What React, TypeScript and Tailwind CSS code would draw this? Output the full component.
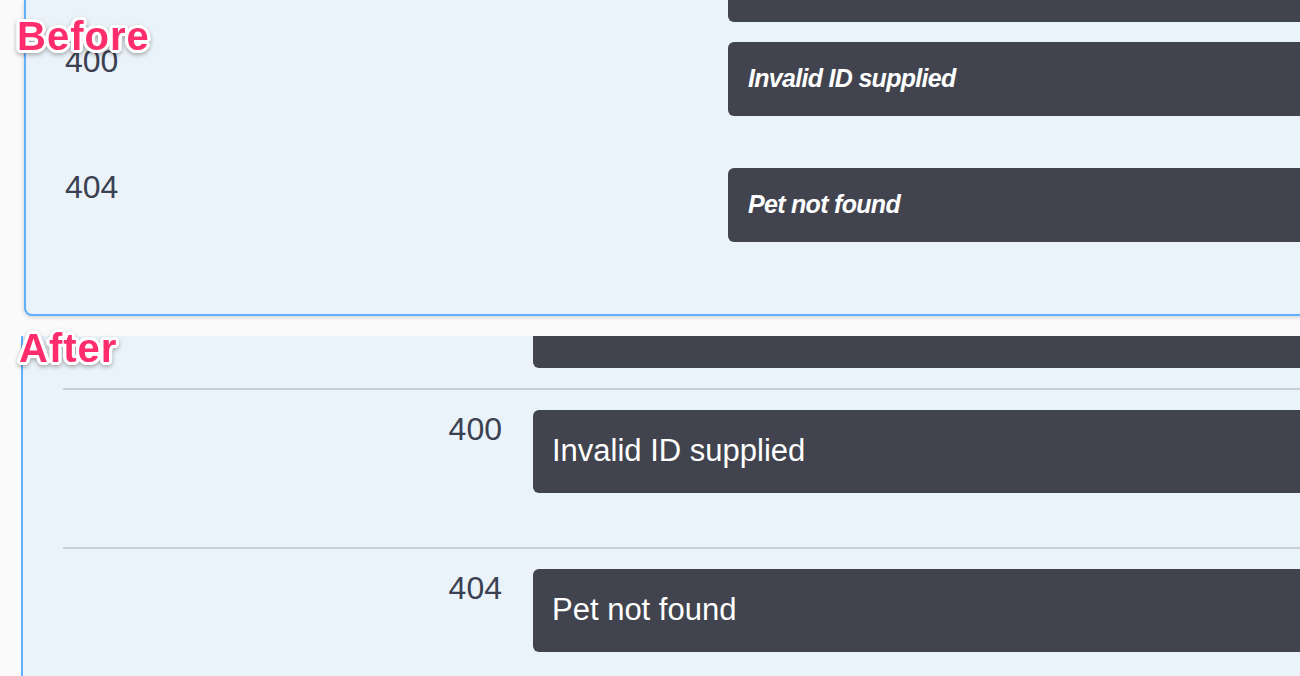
const labelShadow =
  '[text-shadow:3px_0_0_#fff,-3px_0_0_#fff,0_3px_0_#fff,0_-3px_0_#fff,2px_2px_0_#fff,-2px_-2px_0_#fff,2px_-2px_0_#fff,-2px_2px_0_#fff,1px_3px_0_#fff,-1px_3px_0_#fff,3px_1px_0_#fff,-3px_1px_0_#fff,1px_-3px_0_#fff,-1px_-3px_0_#fff,3px_-1px_0_#fff,-3px_-1px_0_#fff]';

function Label({ text }: { text: string }) {
  return (
    <span
      className={`font-['Liberation_Sans',Arial,sans-serif] text-[40px] leading-none font-bold tracking-[1px] text-[#ff2d6b] ${labelShadow} [filter:drop-shadow(0_2px_2px_rgba(0,0,0,0.3))]`}
    >
      {text}
    </span>
  );
}

const rows = [
  { code: '400', text: 'Invalid ID supplied' },
  { code: '404', text: 'Pet not found' },
];

export default function App() {
  return (
    <div className="relative w-[1300px] h-[676px] overflow-hidden bg-[#fafafa] font-['Liberation_Sans',Arial,sans-serif] text-[#3b4151]">
      {/* Before */}
      <div className="ml-[24px] w-[1320px] h-[316px] flex flex-col border-2 border-t-0 border-[#61affe] rounded-b-[8px] bg-[#ebf3fa] shadow-[0_1px_4px_rgba(0,0,0,0.19)]">
        <div className="pl-[702px]">
          <div className="h-[22px] bg-[#41444e] rounded-b-[6px]" />
        </div>
        <div className="flex flex-col gap-[52px] mt-[20px]">
          {rows.map((r) => (
            <div key={r.code} className="flex items-start pl-[39px]">
              <div className="w-[663px] mt-[1px] text-[32px] leading-[36px]">{r.code}</div>
              <div className="flex-1 h-[74px] flex items-center pl-[20px] bg-[#41444e] rounded-[6px] text-white italic font-bold text-[25px] tracking-[-0.7px]">
                {r.text}
              </div>
            </div>
          ))}
        </div>
      </div>

      {/* After */}
      <div className="mt-[20px] ml-[21px] w-[1320px] h-[360px] border-l-2 border-[#61affe] bg-[#ebf3fa]">
        <div className="pl-[510px]">
          <div className="h-[32px] bg-[#41444e] rounded-b-[6px]" />
        </div>
        <div className="ml-[40px] mt-[20px]">
          {rows.map((r) => (
            <div key={r.code} className="flex items-start border-t-2 border-[#c8cfd8] pt-[20px] pb-[54px]">
              <div className="w-[439px] mt-[1px] text-right text-[32px] leading-[36px]">{r.code}</div>
              <div className="ml-[31px] flex-1 h-[83px] flex items-center pl-[19px] bg-[#41444e] rounded-[6px] text-white text-[31px]">
                {r.text}
              </div>
            </div>
          ))}
        </div>
      </div>

      <div className="absolute left-[17px] top-[16px]">
        <Label text="Before" />
      </div>
      <div className="absolute left-[19px] top-[328px]">
        <Label text="After" />
      </div>
    </div>
  );
}
